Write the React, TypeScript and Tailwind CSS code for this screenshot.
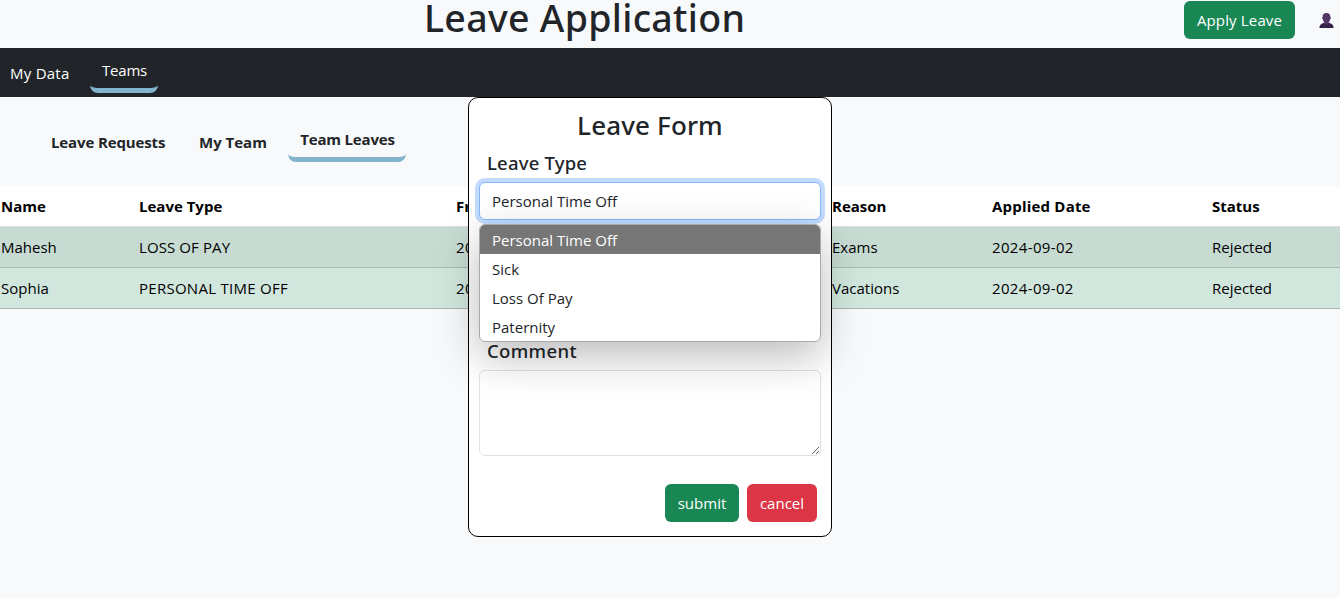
import { ReactNode } from "react";

const options = [
  { label: "Personal Time Off", selected: true },
  { label: "Sick", selected: false },
  { label: "Loss Of Pay", selected: false },
  { label: "Paternity", selected: false },
];

const rows = [
  { name: "Mahesh", type: "LOSS OF PAY", from: "2024-09-05", to: "2024-09-06", reason: "Exams", applied: "2024-09-02", status: "Rejected", bg: "bg-[#c7dbd2]", tracking: "tracking-[0.1px]" },
  { name: "Sophia", type: "PERSONAL TIME OFF", from: "2024-09-09", to: "2024-09-10", reason: "Vacations", applied: "2024-09-02", status: "Rejected", bg: "bg-[#d1e7dd]", tracking: "tracking-[0.27px]" },
];

function Cell({ children, className = "" }: { children: ReactNode; className?: string }) {
  return <div className={`overflow-hidden pl-px whitespace-nowrap ${className}`}>{children}</div>;
}

const grid = "grid h-[41px] grid-cols-[138px_317px_188px_188px_160px_220px_129px] items-center border-b";
const heading = "font-['Noto_Sans','Open_Sans',sans-serif] font-medium";

function LeaveTable() {
  return (
    <div className="text-black">
      <div className={`${grid} border-[#dee2e6] bg-white font-bold`}>
        <Cell>Name</Cell>
        <Cell>Leave Type</Cell>
        <Cell>From</Cell>
        <Cell>To</Cell>
        <Cell>Reason</Cell>
        <Cell className="tracking-[0.2px]">Applied Date</Cell>
        <Cell>Status</Cell>
      </div>
      {rows.map((r) => (
        <div key={r.name} className={`${grid} border-[#a7b9b1] ${r.bg}`}>
          <Cell>{r.name}</Cell>
          <Cell className={r.tracking}>{r.type}</Cell>
          <Cell className="tracking-[0.35px]">{r.from}</Cell>
          <Cell className="tracking-[0.35px]">{r.to}</Cell>
          <Cell>{r.reason}</Cell>
          <Cell className="tracking-[0.35px]">{r.applied}</Cell>
          <Cell>{r.status}</Cell>
        </div>
      ))}
    </div>
  );
}

function LeaveForm() {
  return (
    <div className="absolute top-[97px] left-[468px] flex h-[440px] w-[364px] flex-col rounded-[10px] border border-black bg-white px-[10px]">
      <h3 className={`mt-[11px] h-[34px] text-center text-[26px] leading-[33px] tracking-[0.15px] ${heading}`}>Leave Form</h3>
      <h5 className={`mt-[8px] h-6 pl-[8px] text-[18.5px] leading-6 tracking-[0.2px] ${heading}`}>Leave Type</h5>
      <div className="relative mt-[7px]">
        <div className="flex h-[38px] items-center rounded-[6px] border border-[#86b7fe] bg-white pl-3 shadow-[0_0_0_4px_#c2dbfe]">
          Personal Time Off
        </div>
        <div className="absolute top-[42px] left-0 z-10 h-[118px] w-[342px] overflow-hidden rounded-[6px] border border-[#a9a9a9] bg-white shadow-[0_14px_44px_rgba(0,0,0,0.27)]">
          {options.map((o) => (
            <div
              key={o.label}
              className={`flex h-[29px] items-center pt-[2px] pl-3 ${o.selected ? "bg-[#767676] text-white" : "text-[#212529]"}`}
            >
              {o.label}
            </div>
          ))}
        </div>
      </div>
      <h5 className={`mt-[119px] h-6 pl-[8px] text-[18.5px] leading-6 tracking-[0.35px] ${heading}`}>Comment</h5>
      <textarea className="mt-[7px] h-[86px] w-[342px] shrink-0 resize rounded-[6px] border border-[#dee2e6] bg-white" />
      <div className="mt-[28px] flex gap-2 self-end pr-[4px] text-white">
        <button className="h-[38px] w-[74px] rounded-[6px] bg-[#198754]">submit</button>
        <button className="h-[38px] w-[70px] rounded-[6px] bg-[#dc3545]">cancel</button>
      </div>
    </div>
  );
}

export default function App() {
  return (
    <div className="relative h-[598px] w-[1340px] overflow-hidden bg-[#f8f9fb] font-['Open_Sans','Noto_Sans',sans-serif] text-[15px] text-[#212529]">
      <header className="flex h-12 items-start">
        <h1 className={`h-12 w-[759px] pl-[424px] text-[37.5px] leading-[36px] tracking-[0.3px] whitespace-nowrap ${heading}`}>Leave Application</h1>
        <button className="mt-px ml-[425px] h-[38px] w-[111px] rounded-[6px] bg-[#198754] tracking-[0.15px] text-white">Apply Leave</button>
        <svg className="mt-[13px] ml-[24px]" width="15" height="15" viewBox="0 0 15 15">
          <path d="M.4 15C.5 11.700 2.200 10.600 5.200 9.700h4.600c3 .9 4.700 2 4.800 5.300z" fill="#35204a" />
          <path d="M7.500 0C4.900 0 3.600 1.600 3.600 4c-.7.200-.5 1.900.2 2.200.3 1.500.9 2.400 1.500 3v1.200L7.500 12l2.200-1.600V9.200c.6-.6 1.200-1.500 1.500-3 .7-.3.900-2 .2-2.200C11.400 1.600 10.100 0 7.500 0z" fill="#533566" />
        </svg>
      </header>
      <nav className="flex h-[49px] bg-[#212529] text-white">
        <div className="w-[90px] pt-[13px] pl-[10px] leading-6 tracking-[0.25px]">My Data</div>
        <div className="mt-[3px] h-[42px] w-[68px] rounded-[8px] border-b-[5px] border-[#83b4ce] pt-[7px] pl-px text-center leading-6 tracking-[-0.2px]">Teams</div>
      </nav>
      <div className="flex h-[89px] font-bold">
        <div className="w-[148px] pt-[33px] pl-[51px] leading-6 tracking-[-0.13px] whitespace-nowrap">Leave Requests</div>
        <div className="w-[140px] pt-[33px] pl-[51px] leading-6 whitespace-nowrap">My Team</div>
        <div className="mt-[23px] h-[42px] w-[118px] rounded-[8px] border-b-[5px] border-[#83b4ce] pt-[7px] pl-px text-center leading-6 tracking-[-0.18px] whitespace-nowrap">Team Leaves</div>
      </div>
      <LeaveTable />
      <LeaveForm />
    </div>
  );
}
